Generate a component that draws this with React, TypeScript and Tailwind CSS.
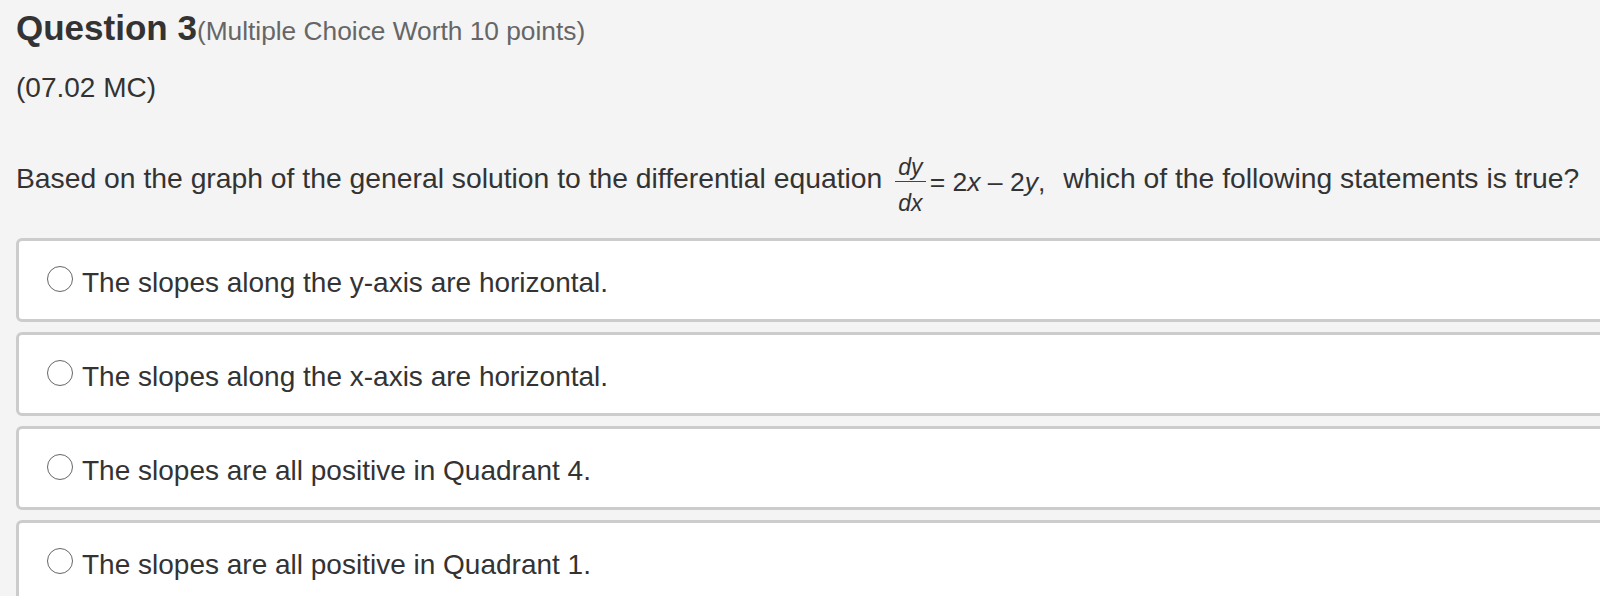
const options = [
  'The slopes along the y-axis are horizontal.',
  'The slopes along the x-axis are horizontal.',
  'The slopes are all positive in Quadrant 4.',
  'The slopes are all positive in Quadrant 1.',
];

function Fraction() {
  return (
    <span className="ml-[13px] mt-[-6px] inline-flex flex-col items-center italic text-[23px] leading-[22px]">
      <span className="pb-[3px] px-[3px] border-b-[1.5px] border-[#444]">dy</span>
      <span className="pt-[10px] px-[3px]">dx</span>
    </span>
  );
}

export default function App() {
  return (
    <div
      className="h-[596px] w-full overflow-hidden bg-[#f4f4f4] text-[#333333]"
      style={{ fontFamily: '"Liberation Sans", Arial, sans-serif' }}
    >
      <div className="pl-[16px]">
        {/* Header */}
        <div className="pt-[8px] text-[35px] leading-[40px]">
          <span className="font-bold">Question 3</span>
          <span className="text-[26.3px] leading-none text-[#666666]">(Multiple Choice Worth 10 points)</span>
        </div>
        <div className="mt-[24px] text-[28px] leading-[32px]">(07.02 MC)</div>

        {/* Question */}
        <div className="mt-[58px] flex items-start whitespace-nowrap text-[28.3px] leading-[32px]">
          <span>Based on the graph of the general solution to the differential equation</span>
          <Fraction />
          <span className="ml-[4px] mt-[4px] text-[26.5px] leading-[32px]">
            = 2<i>x</i> – 2<i>y</i>,
          </span>
          <span className="ml-[18px]">which of the following statements is true?</span>
        </div>

        {/* Choices */}
        <div className="mt-[24px] flex w-[1640px] flex-col gap-[10px]">
          {options.map((o) => (
            <div
              key={o}
              className="flex h-[84px] items-center rounded-[6px] border-[3px] border-[#cccccc] bg-white pl-[28px]"
            >
              <span className="mb-[3px] h-[26px] w-[26px] shrink-0 rounded-full border-[1.5px] border-[#666666] bg-white" />
              <span className="ml-[9px] pt-[5px] text-[28px] leading-[32px]">{o}</span>
            </div>
          ))}
        </div>
      </div>
    </div>
  );
}
